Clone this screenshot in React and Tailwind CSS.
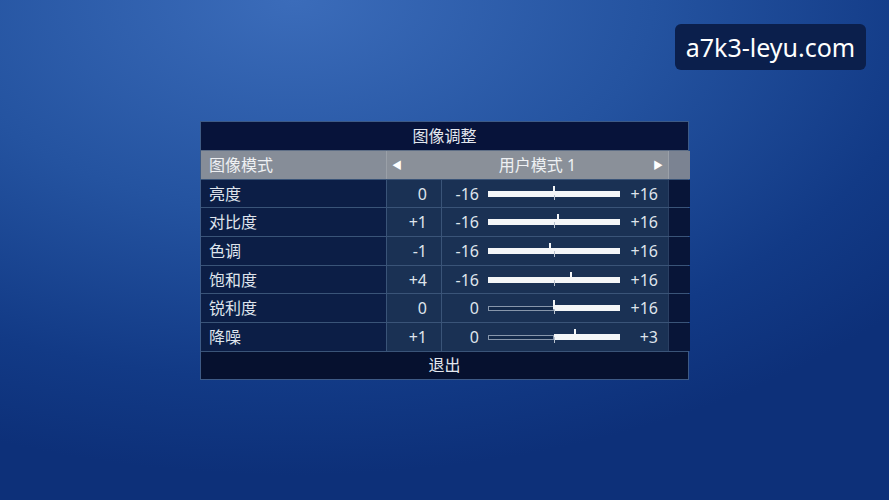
const ROWS = [
  { label: "亮度", value: "0", min: "-16", max: "+16", kind: "full", pos: 0 },
  { label: "对比度", value: "+1", min: "-16", max: "+16", kind: "full", pos: 1 },
  { label: "色调", value: "-1", min: "-16", max: "+16", kind: "full", pos: -1 },
  { label: "饱和度", value: "+4", min: "-16", max: "+16", kind: "full", pos: 4 },
  { label: "锐利度", value: "0", min: "0", max: "+16", kind: "half", pos: 0 },
  { label: "降噪", value: "+1", min: "0", max: "+3", kind: "half", pos: 5 },
];

function Bar({ kind, pos }) {
  const tick = 66 + pos * 4.125;
  return (
    <div className="relative w-[132px] h-[6px]">
      {kind === "full" ? (
        <div className="h-full w-full bg-[#f4f6f8]" />
      ) : (
        <div className="flex h-full w-full">
          <div className="h-[5px] mt-[1px] w-[66px] border border-[#8796ab] bg-[#13294a]" />
          <div className="h-full flex-1 bg-[#f4f6f8]" />
        </div>
      )}
      <div className="absolute left-[66px] top-[3px] h-[6px] w-[1px] bg-[#b9c2ce]" />
      <div
        className="absolute top-[-5px] h-[9px] w-[2px] bg-[#f4f6f8]"
        style={{ left: tick - 1 }}
      />
    </div>
  );
}

function Row({ row }) {
  return (
    <div className="grid grid-cols-[185px_55px_227px_22px] h-[28.7px] border-t border-[#3a5478]">
      <div className="flex items-center pl-[8px] bg-[#0c1e46] text-[#dfe4ec]">
        {row.label}
      </div>
      <div className="flex items-center justify-end pr-[14px] bg-[#1a3154] border-l border-[#3a5478] text-[#dfe4ec]">
        {row.value}
      </div>
      <div className="flex items-center bg-[#1a3154] border-l border-[#3a5478] text-[#dfe4ec]">
        <div className="w-[37px] text-right">{row.min}</div>
        <div className="ml-[9px]">
          <Bar kind={row.kind} pos={row.pos} />
        </div>
        <div className="flex-1 text-right pr-[10px]">{row.max}</div>
      </div>
      <div className="bg-[#081538] border-l border-[#2a3f62]" />
    </div>
  );
}

export default function App() {
  return (
    <div
      className="relative w-[889px] h-[500px] overflow-hidden bg-[radial-gradient(ellipse_90%_95%_at_33%_0%,#3b6cba_0%,#2453a0_45%,#123a86_80%,#0d3079_100%)]"
      style={{ fontFamily: '"Noto Sans", "Noto Sans CJK SC", sans-serif' }}
    >
      <div className="absolute left-[675px] top-[24px] w-[191px] h-[46px] rounded-[6px] bg-[#0b1f4c] flex items-center justify-center text-white text-[25px] leading-none">
        a7k3-leyu.com
      </div>

      <div className="pt-[121px] pl-[200px]">
        <div className="w-[489px] text-[16px] leading-none border border-[#3d5a86] bg-[#081538]">
          <div className="h-[28px] flex items-center justify-center bg-[#07133a] text-[#e3e7ee]">
            图像调整
          </div>
          <div className="grid grid-cols-[185px_282px_22px] h-[28.7px] border-t border-[#5e6e86]">
            <div className="flex items-center pl-[8px] bg-[#868d98] text-[#eef0f3]">
              图像模式
            </div>
            <div className="relative flex items-center justify-center pl-[20px] bg-[#8a9099] border-l border-[#9aa0a8] text-[#eef0f3]">
              <span className="absolute left-[5px] text-[10px] text-white">◀</span>
              <span>用户模式 1</span>
              <span className="absolute right-[5px] text-[10px] text-white">▶</span>
            </div>
            <div className="bg-[#7b8392] border-l border-[#9aa0a8]" />
          </div>
          {ROWS.map((r) => (
            <Row key={r.label} row={r} />
          ))}
          <div className="h-[28px] flex items-center justify-center bg-[#06112f] border-t border-[#3a5478] text-[#e3e7ee]">
            退出
          </div>
        </div>
      </div>
    </div>
  );
}
